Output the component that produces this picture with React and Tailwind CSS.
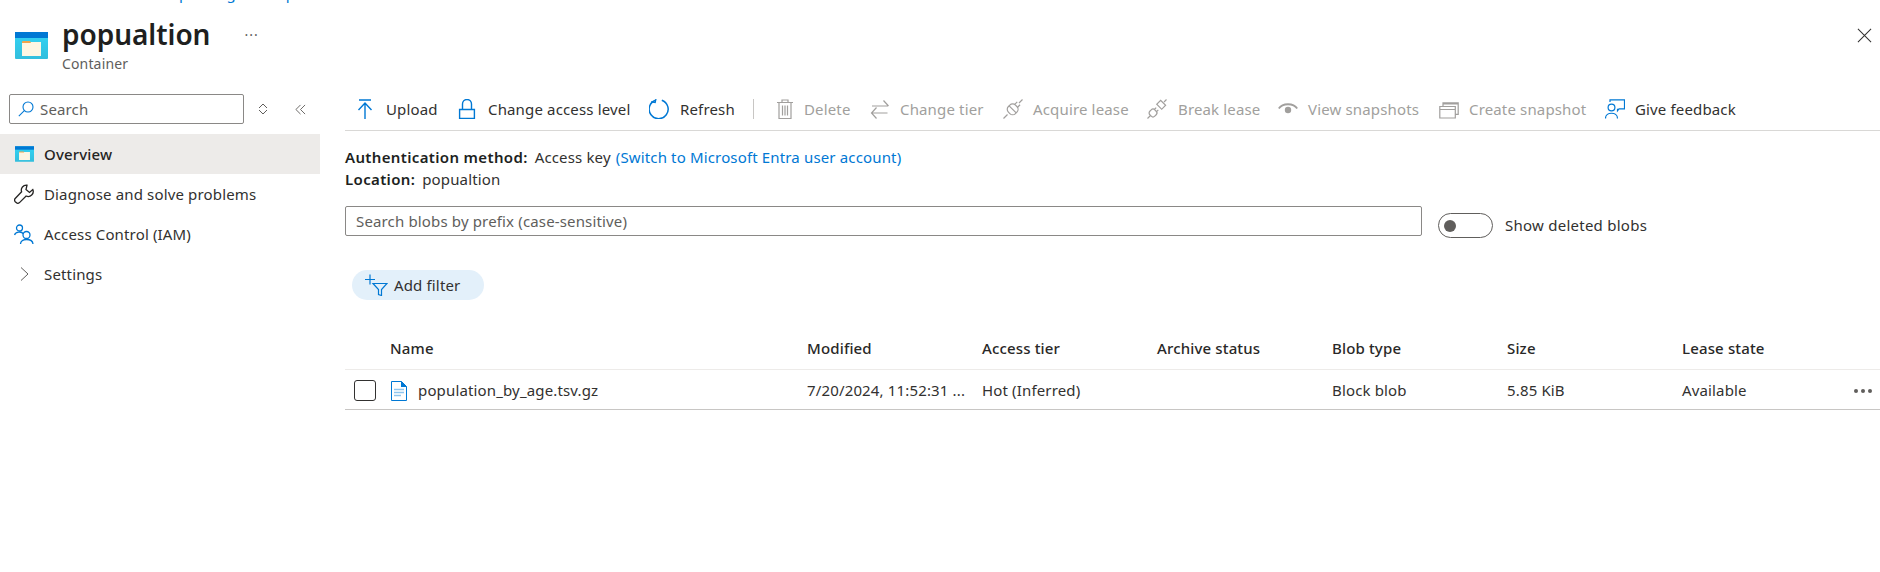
const BLUE = "#0078d4";
const GRAY = "#a19f9d";

function ContainerIcon({ className }) {
  return (
    <svg viewBox="0 0 33 27" className={className}>
      <defs>
        <linearGradient id="cg" x1="0" y1="0" x2="0" y2="1">
          <stop offset="0" stopColor="#32d4f5" />
          <stop offset="1" stopColor="#32bedd" />
        </linearGradient>
      </defs>
      <rect x="0" y="0" width="33" height="27" rx="1" fill="url(#cg)" />
      <rect x="0" y="0" width="33" height="6" fill="#0078d4" />
      <rect x="7" y="10" width="19" height="14" fill="#fdf6e3" />
      <path d="M7 12 V10 Q7 9 8 9 H15 L16 11 H7Z" fill="#f0a44c" />
    </svg>
  );
}

const Svg = ({ children, color = BLUE, w = 20, h = 20, vb = "0 0 20 20", cls = "" }) => (
  <svg viewBox={vb} width={w} height={h} fill="none" stroke={color} strokeWidth="1.2" className={"shrink-0 " + cls}>
    {children}
  </svg>
);

const icons = {
  upload: () => (
    <Svg>
      <path d="M4 1h12M10 20V4M3.500 11L10 4l6.500 7" strokeWidth="1.400" />
    </Svg>
  ),
  lock: () => (
    <Svg>
      <path d="M2.600 10.500h14.800v9H2.600zM5.500 10.500V5a4.500 4.500 0 0 1 9 0v5.500" strokeWidth="1.400" />
    </Svg>
  ),
  refresh: () => (
    <Svg>
      <path d="M12.800 1.200A9.500 9.500 0 1 1 6.500 1.200" strokeWidth="1.500" />
      <path d="M6.500 -0.500V3.500H2.500" strokeWidth="1.300" transform="rotate(12 6 2)" />
    </Svg>
  ),
  trash: () => (
    <Svg color={GRAY}>
      <path d="M2 3.500h16M4 3.500v16h12v-16M7 3.500V1h6v2.500M7.500 6.500v10M10 6.500v10M12.500 6.500v10" />
    </Svg>
  ),
  tier: () => (
    <Svg color={GRAY}>
      <path d="M2 7h16M13.500 1.500L18.500 7M1.500 14h16M6.500 8.500L1.500 14l5 5.500" />
    </Svg>
  ),
  plug: () => (
    <Svg color={GRAY}>
      <path d="M0.500 19.500L4.500 15.500M16 4L19.500 0.500" />
      <g transform="rotate(45 10 10)">
        <rect x="5" y="5.500" width="10" height="10" rx="4" />
        <path d="M5 10.500h10M8 2v3.500M12 2v3.500" />
      </g>
    </Svg>
  ),
  breakLease: () => (
    <Svg color={GRAY}>
      <path d="M0.500 19.500L3.500 16.500M17 3L19.500 0.500" />
      <g transform="rotate(45 14 6)">
        <path d="M10.500 3h7v5.500h-7z" />
      </g>
      <g transform="rotate(45 6 14)">
        <rect x="2.500" y="10.500" width="7" height="7" rx="2.500" />
        <path d="M4.500 8v2.500M7.500 8v2.500" />
      </g>
    </Svg>
  ),
  eye: () => (
    <Svg color={GRAY}>
      <path d="M0.800 9.500C4.500 3.800 15.500 3.800 19.200 9.500" strokeWidth="1.800" />
      <circle cx="10" cy="11" r="3.200" fill={GRAY} stroke="none" />
    </Svg>
  ),
  snapshot: () => (
    <Svg color={GRAY}>
      <path d="M0.800 7.500h15.500v11.500H0.800zM0.800 10.500h15.500M4 7.500V3.800h15.200v11.500h-3M4 5h15" />
    </Svg>
  ),
  feedback: () => (
    <Svg>
      <circle cx="6.500" cy="8.500" r="3.400" />
      <path d="M0.500 19.500c0-7 12-7 12 0M5 3V0.800h14.500v9h-5.500l-1.500 2v-2" />
    </Svg>
  ),
};

const TOOLS = [
  ["Upload", "upload", "w-[102px]", true, "ml-[11px]"],
  ["Change access level", "lock", "w-[192px]", true, "ml-[11px]"],
  ["Refresh", "refresh", "w-[104px]", true, "ml-[11px]"],
  ["SEP"],
  ["Delete", "trash", "w-[95px]", false, "ml-[9px]"],
  ["Change tier", "tier", "w-[133px]", false, "ml-[10px]"],
  ["Acquire lease", "plug", "w-[144px]", false, "ml-[10px]"],
  ["Break lease", "breakLease", "w-[131px]", false, "ml-[11px]"],
  ["View snapshots", "eye", "w-[161px]", false, "ml-[10px]"],
  ["Create snapshot", "snapshot", "w-[166px]", false, "ml-[10px]"],
  ["Give feedback", "feedback", "w-[130px]", true, "ml-[10px]"],
];

const COLUMNS = [
  ["Name", "w-[462px] pl-[45px]"],
  ["Modified", "w-[175px]"],
  ["Access tier", "w-[175px]"],
  ["Archive status", "w-[175px]"],
  ["Blob type", "w-[175px]"],
  ["Size", "w-[175px]"],
  ["Lease state", "w-[175px]"],
];

export default function App() {
  return (
    <div
      className="w-[1880px] h-[572px] overflow-hidden bg-white text-[#323130] text-[15px] tracking-[0.15px]"
      style={{ fontFamily: '"Noto Sans", "Open Sans", sans-serif' }}
    >
      {/* Clipped breadcrumb: only the descenders show at the top edge */}
      <div className="h-0">
        <div className="h-[3px] overflow-hidden text-[#0078d4]">
          <div className="flex leading-[16px] -mt-[15px]">
            <span className="ml-[179px]">p</span>
            <span className="ml-[38px]">g</span>
            <span className="ml-[50px]">p</span>
          </div>
        </div>
      </div>

      {/* Header */}
      <header className="h-[88px] flex items-start pl-[15px] pr-[8px] pt-[15px]">
        <ContainerIcon className="w-[33px] h-[27px] mt-[17px] shrink-0" />
        <div className="ml-[14px]">
          <h1 className="text-[28px] leading-[38px] font-semibold text-[#201f1e] tracking-[-0.05px]">popualtion</h1>
          <div className="text-[14px] leading-[18px] text-[#605e5c] mt-[2px]">Container</div>
        </div>
        <div className="ml-[34px] mt-[10px] text-[#605e5c] text-[14px] leading-[20px] tracking-[1px]">···</div>
        <svg viewBox="0 0 16 16" width="15" height="15" className="ml-auto mt-[13px]" stroke="#323130" strokeWidth="1.100" fill="none">
          <path d="M1 1l14 14M15 1L1 15" />
        </svg>
      </header>

      <div className="flex">
        {/* Sidebar */}
        <aside className="w-[320px] shrink-0 pt-[6px]">
          <div className="flex items-center pl-[9px] h-[30px]">
            <div className="w-[235px] h-[30px] border border-[#8a8886] rounded-[2px] flex items-center pl-[8px] text-[#605e5c]">
              <svg viewBox="0 0 16 16" width="16" height="16" fill="none" stroke={BLUE} strokeWidth="1.100">
                <circle cx="10" cy="6" r="5" />
                <path d="M6.300 9.700L0.800 15.200" />
              </svg>
              <span className="ml-[6px]">Search</span>
            </div>
            <svg viewBox="0 0 10 12" width="10" height="12" fill="none" stroke="#605e5c" strokeWidth="1" className="ml-[14px]">
              <path d="M5 1l4 4M5 1L1 5M5 11l4-4M5 11L1 7" />
            </svg>
            <svg viewBox="0 0 12 12" width="11" height="11" fill="none" stroke="#605e5c" strokeWidth="1" className="ml-[27px]">
              <path d="M6 1L1 6l5 5M11 1L6 6l5 5" />
            </svg>
          </div>
          <nav className="mt-[10px]">
            <div className="h-[40px] flex items-center bg-[#edebe9] pl-[15px] font-medium text-[#252423]">
              <ContainerIcon className="w-[19px] h-[16px] shrink-0" />
              <span className="ml-[10px]">Overview</span>
            </div>
            <div className="h-[40px] flex items-center pl-[14px]">
              <svg viewBox="0 0 20 20" width="20" height="20" fill="none" stroke="#252423" strokeWidth="1.300" className="shrink-0">
                <path d="M13 1.200a5 5 0 0 0-5.400 6.600L1.200 14.500a2.500 2.500 0 0 0 0 3.200l1 .9a2.500 2.500 0 0 0 3.300 0l6.600-6.600A5 5 0 0 0 18.800 5.500L15.500 8.500 12 5.500z" />
              </svg>
              <span className="ml-[10px]">Diagnose and solve problems</span>
            </div>
            <div className="h-[40px] flex items-center pl-[14px]">
              <svg viewBox="0 0 20 20" width="20" height="20" fill="none" stroke={BLUE} strokeWidth="1.300" className="shrink-0">
                <circle cx="5.500" cy="4" r="3" />
                <path d="M0.500 11c1-3.500 7-4 9-1" />
                <circle cx="12.500" cy="11" r="3.500" />
                <path d="M6.500 20c0-6 12-6 12.500 0" />
              </svg>
              <span className="ml-[10px]">Access Control (IAM)</span>
            </div>
            <div className="h-[40px] flex items-center pl-[20px]">
              <svg viewBox="0 0 9 14" width="9" height="14" fill="none" stroke="#605e5c" strokeWidth="1" className="shrink-0">
                <path d="M1 0.500L8 7l-7 6.500" />
              </svg>
              <span className="ml-[15px]">Settings</span>
            </div>
          </nav>
        </aside>

        {/* Main */}
        <main className="flex-1 pl-[25px] min-w-0">
          <div className="h-[43px] border-b border-[#d9d8d6] flex items-center pl-[10px]">
            {TOOLS.map(([label, icon, width, active, gap]) => {
              if (label === "SEP") {
                return <div key="sep" className="w-px h-[20px] bg-[#c8c6c4] mr-[21px] shrink-0" />;
              }
              const Icon = icons[icon];
              return (
                <div key={label} className={"flex items-center shrink-0 " + width + (active ? " text-[#323130]" : " text-[#a19f9d]")}>
                  <Icon />
                  <span className={gap + " whitespace-nowrap"}>{label}</span>
                </div>
              );
            })}
          </div>

          <div className="mt-[15px] leading-[22px]">
            <div>
              <span className="font-semibold text-[#201f1e] tracking-[0.35px]">Authentication method:</span>
              <span className="ml-[7px]">Access key</span>
              <span className="ml-[5px] text-[#0078d4]">(Switch to Microsoft Entra user account)</span>
            </div>
            <div>
              <span className="font-semibold text-[#201f1e] tracking-[0.35px]">Location:</span>
              <span className="ml-[7px]">popualtion</span>
            </div>
          </div>

          <div className="flex items-start mt-[16px] h-[30px]">
            <div className="w-[1077px] h-[30px] border border-[#8a8886] rounded-[2px] flex items-center pl-[10px] text-[#605e5c]">
              Search blobs by prefix (case-sensitive)
            </div>
            <div className="ml-[16px] mt-[7px] w-[55px] h-[25px] border border-[#605e5c] rounded-full flex items-center pl-[5px] shrink-0">
              <div className="w-[12px] h-[12px] rounded-full bg-[#605e5c]" />
            </div>
            <span className="ml-[12px] mt-[8px] leading-[22px] tracking-[0.25px]">Show deleted blobs</span>
          </div>

          <div className="mt-[34px] ml-[7px] w-[132px] h-[30px] rounded-full bg-[#e3f0fa] flex items-center pl-[13px]">
            <svg viewBox="0 0 23 22" width="23" height="22" fill="none" stroke="#0078d4" strokeWidth="1.200" className="shrink-0">
              <path d="M0 5.500h10M5 0.500v10M8 9.500h14l-5.500 6v6l-3-1v-5z" />
            </svg>
            <span className="ml-[6px] text-[#323130]">Add filter</span>
          </div>

          <div className="mt-[28px] h-[41px] pb-[1px] flex items-center font-medium text-[#292827]">
            {COLUMNS.map(([name, cls]) => (
              <div key={name} className={cls + " shrink-0"}>{name}</div>
            ))}
          </div>
          <div className="h-[41px] pt-[2px] border-y border-t-[#edebe9] border-b-[#c8c6c4] flex items-center relative">
            <div className="w-[462px] shrink-0 flex items-center pl-[9px]">
              <div className="w-[22px] h-[21px] border border-[#323130] rounded-[3px] shrink-0" />
              <svg viewBox="0 0 16 20" width="16" height="20" className="ml-[15px] shrink-0">
                <path d="M0.500 0.500H10.500L15.500 5.500V19.500H0.500Z" fill="#fff" stroke="#0078d4" />
                <path d="M10 0L16 6H10Z" fill="#0078d4" />
                <path d="M3 8.500H13M3 11.500H13M3 14.500H10" stroke="#8ec5ee" strokeWidth="1.300" />
              </svg>
              <span className="ml-[11px]">population_by_age.tsv.gz</span>
            </div>
            <div className="w-[175px] shrink-0 whitespace-nowrap">7/20/2024, 11:52:31 ...</div>
            <div className="w-[175px] shrink-0">Hot (Inferred)</div>
            <div className="w-[175px] shrink-0"></div>
            <div className="w-[175px] shrink-0">Block blob</div>
            <div className="w-[175px] shrink-0">5.85 KiB</div>
            <div className="w-[175px] shrink-0">Available</div>
            <div className="absolute right-[8px] flex gap-[3px]">
              <span className="w-[4px] h-[4px] rounded-full bg-[#605e5c]" />
              <span className="w-[4px] h-[4px] rounded-full bg-[#605e5c]" />
              <span className="w-[4px] h-[4px] rounded-full bg-[#605e5c]" />
            </div>
          </div>
        </main>
      </div>
    </div>
  );
}
